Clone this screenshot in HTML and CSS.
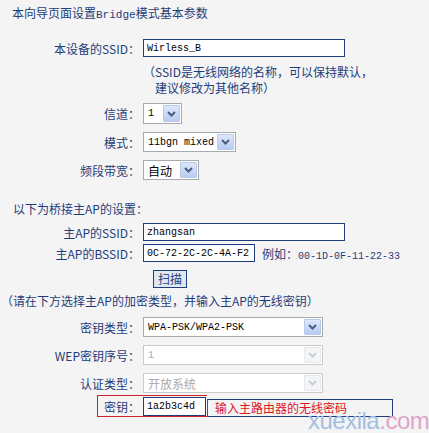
FILE: index.html
```html
<!DOCTYPE html>
<html lang="zh-CN">
<head>
    <meta charset="UTF-8">
    <meta name="viewport" content="width=device-width, initial-scale=1.0">
    <title>Bridge模式基本参数</title>
    <link rel="stylesheet" href="styles.css">
</head>
<body>
    <div class="page">
        <div class="title">本向导页面设置<span class="latin">Bridge</span>模式基本参数</div>

        <!-- local wireless settings -->
        <div class="row row-ssid">
            <span class="label">本设备的SSID：</span>
            <input class="text-box w-wide" type="text" value="Wirless_B">
        </div>
        <div class="hint">（SSID是无线网络的名称，可以保持默认，<br>建议修改为其他名称）</div>

        <div class="row row-channel">
            <span class="label">信道：</span>
            <div class="select w-channel"><span class="value mono">1</span><span class="arrow"><svg width="9" height="6" viewBox="0 0 9 6"><path d="M1 1 L4.5 4.5 L8 1" fill="none" stroke="currentColor" stroke-width="2"/></svg></span></div>
        </div>
        <div class="row row-select">
            <span class="label">模式：</span>
            <div class="select w-mode"><span class="value mono">11bgn mixed</span><span class="arrow"><svg width="9" height="6" viewBox="0 0 9 6"><path d="M1 1 L4.5 4.5 L8 1" fill="none" stroke="currentColor" stroke-width="2"/></svg></span></div>
        </div>
        <div class="row row-select">
            <span class="label">频段带宽：</span>
            <div class="select w-band"><span class="value">自动</span><span class="arrow"><svg width="9" height="6" viewBox="0 0 9 6"><path d="M1 1 L4.5 4.5 L8 1" fill="none" stroke="currentColor" stroke-width="2"/></svg></span></div>
        </div>

        <!-- root AP settings -->
        <div class="section">以下为桥接主AP的设置：</div>
        <div class="row row-ap">
            <span class="label">主AP的SSID：</span>
            <input class="text-box w-wide" type="text" value="zhangsan">
        </div>
        <div class="row row-bssid">
            <span class="label">主AP的BSSID：</span>
            <input class="text-box w-bssid" type="text" value="0C-72-2C-2C-4A-F2">
            <span class="example">例如：<span class="mono">00-1D-0F-11-22-33</span></span>
        </div>
        <div class="row row-scan">
            <button class="scan-btn" type="button">扫描</button>
        </div>
        <div class="section notice">（请在下方选择主AP的加密类型，并输入主AP的无线密钥）</div>

        <div class="row row-key-type">
            <span class="label">密钥类型：</span>
            <div class="select w-full"><span class="value mono">WPA-PSK/WPA2-PSK</span><span class="arrow"><svg width="9" height="6" viewBox="0 0 9 6"><path d="M1 1 L4.5 4.5 L8 1" fill="none" stroke="currentColor" stroke-width="2"/></svg></span></div>
        </div>
        <div class="row row-select">
            <span class="label">WEP密钥序号：</span>
            <div class="select w-full disabled"><span class="value mono">1</span><span class="arrow"><svg width="9" height="6" viewBox="0 0 9 6"><path d="M1 1 L4.5 4.5 L8 1" fill="none" stroke="currentColor" stroke-width="2"/></svg></span></div>
        </div>
        <div class="row row-select">
            <span class="label">认证类型：</span>
            <div class="select w-full disabled"><span class="value">开放系统</span><span class="arrow"><svg width="9" height="6" viewBox="0 0 9 6"><path d="M1 1 L4.5 4.5 L8 1" fill="none" stroke="currentColor" stroke-width="2"/></svg></span></div>
        </div>

        <div class="row row-key">
            <div class="key-box">
                <span class="key-label">密钥：</span>
                <input class="text-box w-key" type="text" value="1a2b3c4d">
            </div>
            <div class="key-note">输入主路由器的无线密码</div>
        </div>

        <div class="watermark"><span class="wm-blue">xuexila</span><span class="wm-pink">.com</span></div>
    </div>
</body>
</html>
```

FILE: styles.css
```css
body {
    margin: 0;
    padding: 0;
    background-color: #f4f4f4;
    font-family: "Noto Sans CJK SC", sans-serif;
    font-size: 12px;
    color: #1f3d7a;
}

.page {
    position: relative;
    width: 429px;
    height: 433px;
    overflow: hidden;
}

.latin {
    font-family: "Liberation Mono", monospace;
    font-size: 11px;
}

.mono {
    font-family: "Liberation Mono", monospace;
    font-size: 10px;
}

.title {
    height: 26px;
    line-height: 26px;
    padding-left: 12px;
}

.row {
    display: flex;
    align-items: center;
}

.label {
    width: 140px;
    text-align: right;
    margin-right: 3px;
    white-space: nowrap;
}

.row-ssid {
    height: 18px;
    margin-top: 13px;
}

.hint {
    margin-top: 7px;
    padding-left: 155px;
    text-indent: -12px;
    line-height: 16px;
}

.row-channel {
    height: 21px;
    margin-top: 7px;
}

.row-select {
    height: 20px;
    margin-top: 8px;
}

.row-key-type {
    height: 20px;
    margin-top: 7px;
}

.section {
    margin-top: 19px;
    padding-left: 13px;
    line-height: 20px;
}

.notice {
    margin-top: 4px;
    padding-left: 1px;
    line-height: 18px;
}

.row-ap {
    height: 18px;
    margin-top: 4px;
}

.row-bssid {
    height: 18px;
    margin-top: 3px;
}

.row-scan {
    height: 18px;
    margin-top: 8px;
    padding-left: 153px;
}

/* text inputs */
.text-box {
    box-sizing: border-box;
    height: 18px;
    margin: 0;
    padding: 0 3px;
    border: 1px solid #1f3d7a;
    background: #fff;
    color: #000;
    font-family: "Liberation Mono", monospace;
    font-size: 10px;
    outline: none;
}

.w-wide {
    width: 202px;
}

.w-bssid {
    width: 112px;
}

.w-key {
    width: 63px;
    height: 19px;
}

.example {
    margin-left: 7px;
    white-space: nowrap;
}

.scan-btn {
    box-sizing: border-box;
    width: 34px;
    height: 18px;
    padding: 0;
    border: 1px solid #1f3d7a;
    background: #dfe7f3;
    color: #1f3d7a;
    font-family: "Noto Sans CJK SC", sans-serif;
    font-size: 12px;
    line-height: 16px;
}

/* drop-down boxes */
.select {
    box-sizing: border-box;
    display: flex;
    align-items: stretch;
    height: 100%;
    border: 1px solid #a7abb0;
    background: #fff;
    color: #000;
}

.select .value {
    flex: 1;
    display: flex;
    align-items: center;
    padding-left: 4px;
    white-space: nowrap;
    overflow: hidden;
}

.select .arrow {
    width: 15px;
    margin: 1px;
    display: flex;
    align-items: center;
    justify-content: center;
    border: 1px solid #b9c9ea;
    border-radius: 1px;
    background: linear-gradient(#dde7fb, #b8cbf3);
    color: #4b5d80;
}

.select.disabled {
    border-color: #c9cbcd;
    color: #a9a9a9;
}

.select.disabled .arrow {
    border-color: #e6e8eb;
    background: #f4f5f6;
    color: #c9ced6;
}

.w-channel {
    width: 39px;
}

.w-mode {
    width: 93px;
}

.w-band {
    width: 56px;
}

.w-full {
    width: 180px;
}

/* key row */
.row-key {
    align-items: flex-start;
    margin-top: 2px;
    padding-left: 97px;
}

.key-box {
    box-sizing: border-box;
    display: flex;
    align-items: flex-end;
    width: 110px;
    height: 22px;
    border: 1px solid #d0202a;
    border-right: none;
}

.key-label {
    width: 42px;
    margin-right: 3px;
    text-align: right;
    align-self: center;
}

.key-note {
    box-sizing: border-box;
    width: 186px;
    height: 18px;
    margin-top: 4px;
    padding-left: 7px;
    border: 1px solid #1f3d7a;
    border-left: 1px solid #d0202a;
    color: #e0141e;
    line-height: 16px;
    white-space: nowrap;
}

.watermark {
    position: absolute;
    left: 308px;
    top: 407px;
    font-family: "Liberation Sans", sans-serif;
    font-size: 24px;
    line-height: 28px;
    letter-spacing: -0.5px;
}

.wm-blue {
    color: #a3bfe2;
}

.wm-pink {
    color: #dfa4cc;
}
```
